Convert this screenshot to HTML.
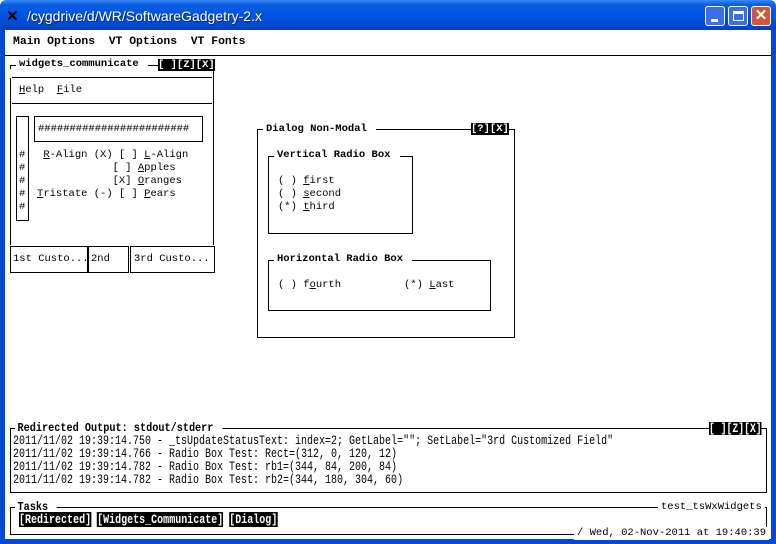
<!DOCTYPE html>
<html><head><meta charset="utf-8"><style>
*{margin:0;padding:0;box-sizing:border-box}
body{width:776px;height:544px;overflow:hidden;background:#fff;position:relative;font-family:"Liberation Mono","DejaVu Sans Mono",monospace;font-size:10.5px;color:#000}
.a{position:absolute;white-space:pre;line-height:13px}
.h{position:absolute;background:#000;height:1px}
.v{position:absolute;background:#000;width:1px}
.bx{position:absolute;border:1px solid #000}
.b{font-weight:bold}
.w{background:#fff}
.inv{background:#000;color:#fff;font-weight:bold}
.n{transform-origin:0 0;transform:scaleX(0.8);font-size:12.5px}
u{text-decoration:underline}
</style></head><body>
<div style="position:absolute;left:0;top:0;width:776px;height:30px;background:linear-gradient(#3d8af7 0%,#0a5fe0 15%,#0054e3 50%,#0048d0 85%,#0a3fb0 100%);border-radius:6px 6px 0 0"></div>
<div style="position:absolute;left:0;top:30px;width:5px;height:514px;background:#0048d8"></div>
<div style="position:absolute;left:771px;top:30px;width:5px;height:514px;background:#0048d8"></div>
<div style="position:absolute;left:0;top:539px;width:776px;height:5px;background:#0048d8"></div>
<div class="a" style="left:6px;top:7px;font:bold 15px 'Liberation Sans',sans-serif;color:#000">✕</div>
<div class="a" style="left:27px;top:8px;font:14px 'Liberation Sans',sans-serif;color:#fff;line-height:16px;text-shadow:1px 1px #0a2a80">/cygdrive/d/WR/SoftwareGadgetry-2.x</div>
<div style="position:absolute;left:705px;top:6px;width:20px;height:20px;background:#3a6fe8;border:1px solid #fff;border-radius:3px"><div style="position:absolute;left:5px;top:12px;width:7px;height:3px;background:#fff"></div></div>
<div style="position:absolute;left:728px;top:6px;width:20px;height:20px;background:#3a6fe8;border:1px solid #fff;border-radius:3px"><div style="position:absolute;left:4px;top:4px;width:11px;height:10px;border:1px solid #fff;border-top-width:3px"></div></div>
<div style="position:absolute;left:751px;top:6px;width:20px;height:20px;background:#d0573c;border:1px solid #fff;border-radius:3px;color:#fff;font:bold 15px 'Liberation Sans',sans-serif;text-align:center;line-height:18px">✕</div>

<div class="a b" style="left:13px;top:36px;font-size:11.4px">Main Options  VT Options  VT Fonts</div>
<div class="h" style="left:5px;top:55px;width:766px"></div>

<div class="h" style="left:10px;top:65px;width:204px"></div>
<div class="v" style="left:10px;top:65px;height:4px"></div>
<div class="v" style="left:213px;top:65px;height:180px"></div>
<div class="v" style="left:10px;top:78px;height:167px"></div>
<div class="a b w" style="left:16px;top:58px;padding:0 3px">widgets_communicate </div>
<div class="a inv" style="left:158px;top:59px;line-height:12px">[ ][Z][X]</div>
<div class="h" style="left:12px;top:77px;width:200px"></div>
<div class="a" style="left:19px;top:84px"><u>H</u>elp  <u>F</u>ile</div>
<div class="h" style="left:12px;top:103px;width:200px"></div>
<div class="bx" style="left:16px;top:116px;width:13px;height:105px"></div>
<div class="a" style="left:19px;top:149px">#
#
#
#
#</div>
<div class="bx" style="left:34px;top:116px;width:169px;height:26px"></div>
<div class="a" style="left:38px;top:123px">########################</div>
<div class="a" style="left:37px;top:149px"> <u>R</u>-Align (X) [ ] <u>L</u>-Align
            [ ] <u>A</u>pples
            [X] <u>O</u>ranges
<u>T</u>ristate (-) [ ] <u>P</u>ears</div>
<div class="bx" style="left:10px;top:246px;width:78px;height:27px"></div>
<div class="bx" style="left:88px;top:246px;width:41px;height:27px"></div>
<div class="bx" style="left:130px;top:246px;width:85px;height:27px"></div>
<div class="a" style="left:13px;top:253px">1st Custo...</div>
<div class="a" style="left:91px;top:253px">2nd</div>
<div class="a" style="left:134px;top:253px">3rd Custo...</div>

<div class="bx" style="left:257px;top:129px;width:258px;height:209px"></div>
<div class="a b w" style="left:263px;top:123px;padding:0 3px">Dialog Non-Modal </div>
<div class="a inv" style="left:471px;top:123px;line-height:12px">[?][X]</div>
<div class="bx" style="left:268px;top:156px;width:145px;height:78px"></div>
<div class="a b w" style="left:274px;top:149px;padding:0 3px">Vertical Radio Box </div>
<div class="a" style="left:278px;top:175px">( ) <u>f</u>irst
( ) <u>s</u>econd
(*) <u>t</u>hird</div>
<div class="bx" style="left:268px;top:260px;width:223px;height:51px"></div>
<div class="a b w" style="left:274px;top:253px;padding:0 3px">Horizontal Radio Box </div>
<div class="a" style="left:278px;top:279px">( ) f<u>o</u>urth          (*) <u>L</u>ast</div>

<div class="h" style="left:10px;top:428px;width:757px"></div>
<div class="v" style="left:10px;top:428px;height:65px"></div>
<div class="v" style="left:766px;top:428px;height:65px"></div>
<div class="h" style="left:10px;top:492px;width:757px"></div>
<div class="a b w n" style="left:15px;top:422px;padding:0 3px;font-size:12px;transform:scaleX(0.85)">Redirected Output: stdout/stderr </div>
<div class="a inv n" style="left:709px;top:422px;font-size:13px;transform:scaleX(0.75)">[ ][Z][X]</div>
<div class="a n" style="left:13px;top:435px">2011/11/02 19:39:14.750 - _tsUpdateStatusText: index=2; GetLabel=""; SetLabel="3rd Customized Field"
2011/11/02 19:39:14.766 - Radio Box Test: Rect=(312, 0, 120, 12)
2011/11/02 19:39:14.782 - Radio Box Test: rb1=(344, 84, 200, 84)
2011/11/02 19:39:14.782 - Radio Box Test: rb2=(344, 180, 304, 60)</div>

<div class="h" style="left:10px;top:507px;width:757px"></div>
<div class="v" style="left:10px;top:507px;height:28px"></div>
<div class="v" style="left:766px;top:507px;height:28px"></div>
<div class="h" style="left:10px;top:534px;width:757px"></div>
<div class="a b w n" style="left:15px;top:501px;padding:0 3px;font-size:12px;transform:scaleX(0.85)">Tasks </div>
<div class="a w" style="left:658px;top:501px;padding:0 3px">test_tsWxWidgets</div>
<div class="a n" style="left:19px;top:513px;font-size:13px;transform:scaleX(0.77)"><span class="inv">[Redirected]</span> <span class="inv">[Widgets_Communicate]</span> <span class="inv">[Dialog]</span></div>
<div class="a w" style="left:574px;top:527px;padding:0 3px">/ Wed, 02-Nov-2011 at 19:40:39</div>
</body></html>
